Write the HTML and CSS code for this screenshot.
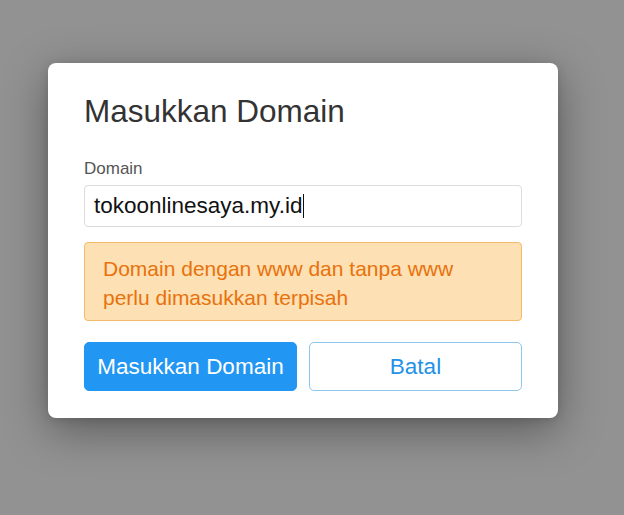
FILE: index.html
```html
<!DOCTYPE html>
<html lang="id">
<head>
<meta charset="utf-8">
<title>Masukkan Domain</title>
<link rel="stylesheet" href="styles.css">
</head>
<body>
<div class="overlay">
  <div class="modal">
    <h2 class="modal-title">Masukkan Domain</h2>
    <label class="field-label">Domain</label>
    <div class="input"><span class="input-text">tokoonlinesaya.my.id</span><span class="caret"></span></div>
    <div class="alert">Domain dengan www dan tanpa www<br>perlu dimasukkan terpisah</div>
    <div class="actions">
      <button class="btn btn-primary">Masukkan Domain</button>
      <button class="btn btn-outline">Batal</button>
    </div>
  </div>
</div>
</body>
</html>
```
FILE: styles.css
```css
html, body {
  margin: 0;
  padding: 0;
}
body {
  background: #929292;
  font-family: "Liberation Sans", Arial, sans-serif;
  width: 624px;
  height: 515px;
  overflow: hidden;
}
.overlay {
  padding: 63px 0 0 48px;
}
.modal {
  width: 510px;
  box-sizing: border-box;
  background: #fff;
  border-radius: 8px;
  padding: 30px 36px 27px;
  box-shadow: 0 12px 45px rgba(0, 0, 0, 0.38), 0 2px 10px rgba(0, 0, 0, 0.12);
}
.modal-title {
  margin: 0 0 30px;
  font-size: 31.5px;
  line-height: 36px;
  font-weight: normal;
  color: #333;
}
.field-label {
  display: block;
  font-size: 17px;
  line-height: 20px;
  color: #555;
  margin-bottom: 6px;
}
.input {
  height: 42px;
  box-sizing: border-box;
  border: 1px solid #dcdcdc;
  border-radius: 4px;
  padding: 0 9px;
  display: flex;
  align-items: center;
  font-size: 22.5px;
  color: #111;
}
.caret {
  display: inline-block;
  width: 1px;
  height: 24px;
  background: #111;
  margin-left: 1px;
}
.alert {
  margin-top: 15px;
  background: #fde0b3;
  border: 1px solid #f4bb6a;
  border-radius: 4px;
  padding: 12px 18px 8px;
  font-size: 21px;
  line-height: 28.5px;
  color: #e8720c;
}
.actions {
  margin-top: 21px;
  display: flex;
  gap: 12px;
}
.btn {
  flex: 1;
  height: 49px;
  border-radius: 5px;
  font-family: "Liberation Sans", Arial, sans-serif;
  font-size: 22.5px;
  cursor: pointer;
  padding: 0;
}
.btn-primary {
  background: #2196f3;
  border: 1px solid #2196f3;
  color: #fff;
}
.btn-outline {
  background: #fff;
  border: 1px solid #8fc6ef;
  color: #2391e8;
}
```
